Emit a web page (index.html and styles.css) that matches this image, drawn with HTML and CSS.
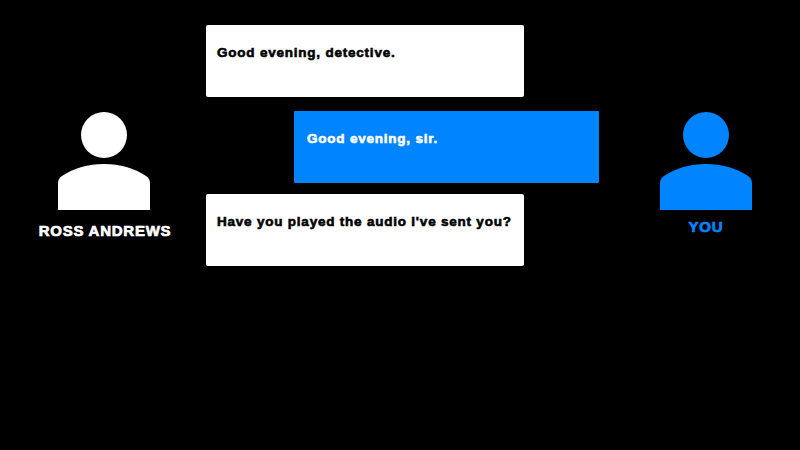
FILE: index.html
```html
<!DOCTYPE html>
<html lang="en">
<head>
<meta charset="utf-8">
<title>Conversation</title>
<link rel="stylesheet" href="styles.css">
</head>
<body>
<main class="stage">
  <section class="speaker speaker-left">
    <svg class="avatar" viewBox="0 0 92 98" aria-hidden="true"><circle cx="46" cy="23" r="23"/><path d="M0 98V72C0 68 1 66 4 64C16 56 30 52 46 52C62 52 76 56 88 64C91 66 92 68 92 72V98Z"/></svg>
    <div class="name name-left">ROSS ANDREWS</div>
  </section>
  <section class="chat">
    <div class="bubble bubble-them first">Good evening, detective.</div>
    <div class="bubble bubble-me">Good evening, sir.</div>
    <div class="bubble bubble-them last">Have you played the audio I've sent you?</div>
  </section>
  <section class="speaker speaker-right">
    <svg class="avatar" viewBox="0 0 92 98" aria-hidden="true"><circle cx="46" cy="23" r="23"/><path d="M0 98V72C0 68 1 66 4 64C16 56 30 52 46 52C62 52 76 56 88 64C91 66 92 68 92 72V98Z"/></svg>
    <div class="name name-right">YOU</div>
  </section>
</main>
</body>
</html>
```
FILE: styles.css
```css
html, body {
  margin: 0;
  height: 100%;
  background: #000;
}
.stage {
  display: flex;
  width: 800px;
  height: 450px;
  overflow: hidden;
  font-family: "Liberation Sans", Arial, sans-serif;
  font-weight: 700;
}
.speaker {
  display: flex;
  flex-direction: column;
  align-items: center;
  padding-top: 112px;
  box-sizing: border-box;
}
.speaker-left {
  width: 206px;
  padding-left: 2px;
  color: #fff;
}
.speaker-right {
  width: 201px;
  padding-left: 13px;
  color: #0084ff;
}
.avatar {
  display: block;
  width: 92px;
  height: 98px;
  fill: currentColor;
}
.name {
  font-size: 15px;
  line-height: 18px;
  -webkit-text-stroke: 0.7px currentColor;
}
.name-left {
  margin-top: 12px;
  margin-left: 2px;
  letter-spacing: 0.75px;
}
.name-right {
  margin-top: 8px;
  letter-spacing: 0.8px;
}
.chat {
  display: flex;
  flex-direction: column;
  width: 393px;
  padding-top: 25px;
}
.bubble {
  box-sizing: border-box;
  height: 72px;
  padding: 20px 11px;
  border-radius: 2px;
  font-size: 13.5px;
  line-height: 16px;
  letter-spacing: 0.78px;
  -webkit-text-stroke: 0.6px currentColor;
}
.bubble-them {
  width: 318px;
  background: #fff;
  color: #000;
}
.bubble-me {
  width: 305px;
  margin: 14px 0 11px 88px;
  padding-left: 13px;
  border-radius: 1px;
  background: #0084ff;
  color: #fff;
}
```
